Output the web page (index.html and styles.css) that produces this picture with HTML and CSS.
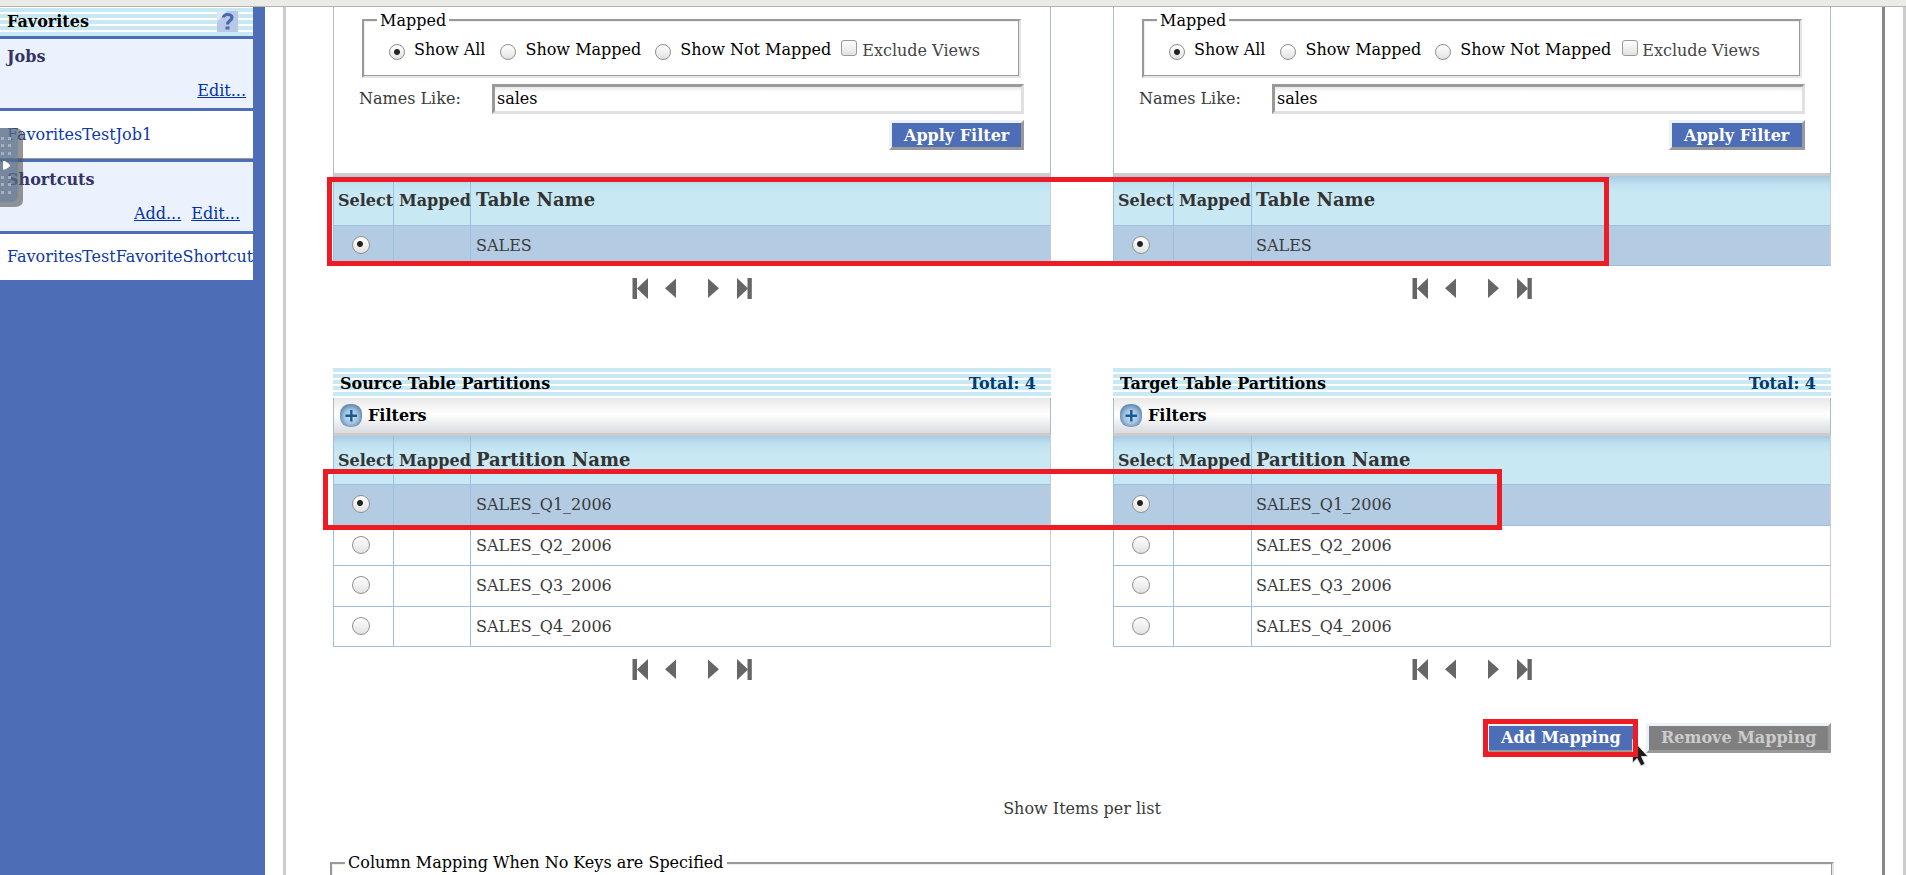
FILE: index.html
```html
<!DOCTYPE html>
<html lang="en">
<head>
<meta charset="utf-8">
<title>Table Mapping</title>
<link rel="stylesheet" href="styles.css">
</head>
<body>
<svg class="defs" width="0" height="0">
  <defs>
    <radialGradient id="ball" cx=".5" cy=".55" r=".6"><stop offset="0" stop-color="#cfe4f4"/><stop offset=".5" stop-color="#a4c4df"/><stop offset=".85" stop-color="#6a90b6"/></radialGradient>
    <symbol id="first" viewBox="0 0 16 21"><path d="M.5 0H5V21H.5ZM16 0V21L5 10.500Z"/></symbol>
    <symbol id="prev" viewBox="0 0 11 21"><path d="M11 .5V20L0 10.300Z"/></symbol>
    <symbol id="next" viewBox="0 0 11 21"><path d="M0 .5V20L11 10.300Z"/></symbol>
    <symbol id="last" viewBox="0 0 16 21"><path d="M10.500 0H14.800V21H10.500ZM0 0V21L11 10.500Z"/></symbol>
    <symbol id="plus" viewBox="0 0 22 23"><rect x="0" y="0" width="22" height="23" rx="9.500" fill="url(#ball)"/><path d="M11.300 6V17.500M5.500 11.800H17" stroke="#155a94" stroke-width="2.400" fill="none"/></symbol>
  </defs>
</svg>
<div class="top"></div>
<div class="app">
  <aside class="side">
    <div class="fav"><b>Favorites</b>
      <svg class="help" viewBox="0 0 21 21"><rect width="21" height="21" fill="#b9c8e6"/><path d="M0 0H10L0 11Z" fill="#dfe6f5"/><path d="M6.500 6.500C6.500 2.500 15 2.500 15 6.500C15 9.500 10.500 9.500 10.500 13.500" fill="none" stroke="#4a68b0" stroke-width="3.200"/><rect x="8.500" y="15.500" width="4" height="3" fill="#4a68b0"/></svg>
    </div>
    <div class="group"><b>Jobs</b><div class="links jobs"><a>Edit...</a></div></div>
    <div class="item underline">FavoritesTestJob1</div>
    <div class="group"><b>Shortcuts</b><div class="links"><a>Add...</a><a>Edit...</a></div></div>
    <div class="item last">FavoritesTestFavoriteShortcut</div>
    <svg class="handle" viewBox="0 0 23 80"><path d="M0 0H15Q23 0 23 8V72Q23 79 15 79H0Z" fill="#505050" fill-opacity=".6"/><path d="M0 0H12Q18 1 18 8V66Q18 74 11 74H0Z" fill="#5c7ba6" fill-opacity=".5"/><path d="M3 33H5Q10 36 10 37.500Q10 39 5 41.500H3Z" fill="#fff"/><g fill="#a5b1c1"><path d="M1 9h3v3h-3zM8 9h3v3h-3zM1 16h3v3h-3zM8 16h3v3h-3zM1 24h3v3h-3zM8 24h3v3h-3zM1 48h3v3h-3zM8 48h3v3h-3zM1 55h3v3h-3zM8 55h3v3h-3zM1 63h3v3h-3zM8 63h3v3h-3z"/></g></svg>
  </aside>
  <main class="main">
    <div class="pair">
      <section class="panel">
        <div class="filter">
          <fieldset class="mapped"><legend>Mapped</legend><div class="opts">
            <i class="radio on"></i><span>Show All</span><i class="radio r2"></i><span>Show Mapped</span><i class="radio r3"></i><span>Show Not Mapped</span><i class="check"></i><span class="ex">Exclude Views</span></div></fieldset>
          <div class="like"><label>Names Like:</label><div class="input">sales</div></div>
          <div class="act"><div class="btn">Apply Filter</div></div>
        </div>
        <div class="grid">
          <div class="row head"><b>Select</b><b>Mapped</b><b class="big">Table Name</b></div>
          <div class="row sel"><span><i class="radio on"></i></span><span></span><span>SALES</span></div>
        </div>
        <div class="pager"><svg><use href="#first"/></svg><svg class="s"><use href="#prev"/></svg><svg class="s n"><use href="#next"/></svg><svg><use href="#last"/></svg></div>
      </section>
      <section class="panel target">
        <div class="filter">
          <fieldset class="mapped"><legend>Mapped</legend><div class="opts">
            <i class="radio on"></i><span>Show All</span><i class="radio r2"></i><span>Show Mapped</span><i class="radio r3"></i><span>Show Not Mapped</span><i class="check"></i><span class="ex">Exclude Views</span></div></fieldset>
          <div class="like"><label>Names Like:</label><div class="input">sales</div></div>
          <div class="act"><div class="btn">Apply Filter</div></div>
        </div>
        <div class="grid">
          <div class="row head"><b>Select</b><b>Mapped</b><b class="big">Table Name</b></div>
          <div class="row sel"><span><i class="radio on"></i></span><span></span><span>SALES</span></div>
        </div>
        <div class="pager"><svg><use href="#first"/></svg><svg class="s"><use href="#prev"/></svg><svg class="s n"><use href="#next"/></svg><svg><use href="#last"/></svg></div>
      </section>
    </div>
    <div class="pair parts">
      <section class="panel">
        <div class="title"><b>Source Table Partitions</b><b class="total">Total: 4</b></div>
        <div class="bar"><svg><use href="#plus"/></svg><b>Filters</b></div>
        <div class="grid">
          <div class="row head"><b>Select</b><b>Mapped</b><b class="big">Partition Name</b></div>
          <div class="row sel tall"><span><i class="radio on"></i></span><span></span><span>SALES_Q1_2006</span></div>
          <div class="row"><span><i class="radio"></i></span><span></span><span>SALES_Q2_2006</span></div>
          <div class="row tall"><span><i class="radio"></i></span><span></span><span>SALES_Q3_2006</span></div>
          <div class="row"><span><i class="radio"></i></span><span></span><span>SALES_Q4_2006</span></div>
        </div>
        <div class="pager"><svg><use href="#first"/></svg><svg class="s"><use href="#prev"/></svg><svg class="s n"><use href="#next"/></svg><svg><use href="#last"/></svg></div>
      </section>
      <section class="panel target">
        <div class="title"><b>Target Table Partitions</b><b class="total">Total: 4</b></div>
        <div class="bar"><svg><use href="#plus"/></svg><b>Filters</b></div>
        <div class="grid">
          <div class="row head"><b>Select</b><b>Mapped</b><b class="big">Partition Name</b></div>
          <div class="row sel tall"><span><i class="radio on"></i></span><span></span><span>SALES_Q1_2006</span></div>
          <div class="row"><span><i class="radio"></i></span><span></span><span>SALES_Q2_2006</span></div>
          <div class="row tall"><span><i class="radio"></i></span><span></span><span>SALES_Q3_2006</span></div>
          <div class="row"><span><i class="radio"></i></span><span></span><span>SALES_Q4_2006</span></div>
        </div>
        <div class="pager"><svg><use href="#first"/></svg><svg class="s"><use href="#prev"/></svg><svg class="s n"><use href="#next"/></svg><svg><use href="#last"/></svg></div>
      </section>
    </div>
    <div class="buttons"><div class="btn add">Add Mapping</div><div class="btn off">Remove Mapping</div></div>
    <div class="show">Show Items per list</div>
    <fieldset class="keys"><legend>Column Mapping When No Keys are Specified</legend></fieldset>
  </main>
  <div class="edge"></div>
</div>
<svg class="cursor" viewBox="0 0 18 28"><path d="M.5 .5V24L5 19.500L9 27L13 25L9.500 17.500H16Z" fill="#1c1c1c" stroke="#ddd"/></svg>
<div class="mark m1"></div>
<div class="mark m2"></div>
<div class="mark m3"></div>
</body>
</html>
```
FILE: styles.css
```css
* { box-sizing: border-box; }
body { margin: 0; height: 875px; overflow: hidden; background: #fff; color: #3a3a3a; font: 16px/20px "DejaVu Serif", serif; white-space: nowrap; }
.defs { position: absolute; }
.top { height: 7px; background: #ebebe8; border-bottom: 1px solid #b5b5a8; }
.app { display: flex; height: 868px; }
.side { position: relative; width: 265px; flex: none; background: #4d6db6; padding-right: 12px; }
.fav { height: 29px; display: flex; justify-content: space-between; padding: 4px 15px 0 7px; color: #000; background: repeating-linear-gradient(#fff 0 1px, #c8e9f4 1px 5px, #fff 5px 6px); }
.fav b { padding-top: 1px; }
.help { width: 21px; height: 21px; }
.group { margin-top: 3px; height: 69px; background: #ecf2fd; padding: 8px 0 0 7px; color: #333366; }
.group b { display: block; }
.links { display: flex; justify-content: flex-end; gap: 10px; padding: 14px 13px 0 0; }
.links.jobs { padding-right: 7px; }
.links a { color: #0033aa; text-decoration: underline; }
.item { margin-top: 3px; height: 47px; padding: 13px 0 0 7px; background: #fff; color: #0c38a8; overflow: hidden; }
.item.underline { height: 48px; border-bottom: 1px solid #999; padding-top: 14px; }
.item.last { height: 46px; }
.handle { position: absolute; left: 0; top: 121px; width: 23px; height: 80px; }
.main { width: 1602px; flex: none; margin-left: 18px; border-left: 3px solid #ccc; border-right: 3px solid #888; padding-left: 47px; }
.edge { margin-left: auto; width: 3px; background: #ccc; }
.pair { display: flex; gap: 62px; }
.panel { width: 718px; }
.filter { height: 169px; border: solid #a8c0c0; border-width: 0 1px; border-bottom: 3px solid #ccc; padding: 1px 0 0 28px; }
.mapped, .keys { border: 2px solid; border-color: #999 #e6e6e6 #e6e6e6 #999; box-shadow: inset -1px -1px #999, inset 1px 1px #eee; }
.mapped { width: 659px; height: 70px; margin: 0; padding: 0 0 0 25px; }
.target .mapped { width: 660px; }
legend { color: #000; padding: 0 3px; margin-left: 13px; background: #fff; }
.mapped legend { margin-left: -12px; height: 24px; padding-top: 3px; }
.opts { display: flex; color: #000; padding-top: 8px; }
.opts span { margin-left: 9px; }
.opts .radio { margin-top: 4px; }
.radio { display: block; width: 16px; height: 16px; flex: none; border-radius: 50%; border: 1px solid #909090; background: linear-gradient(#fff, #e2e2e0); }
.radio.on { background: radial-gradient(circle, #222 0 2.5px, transparent 3.5px), linear-gradient(#fff, #e2e2e0); }
.row .radio.on { background: radial-gradient(circle at 7px 7px, #222 0 2.5px, transparent 3.5px), linear-gradient(#fff, #e2e2e0); }
.opts .r2 { margin-left: 15px; }
.opts .r3 { margin-left: 14px; }
.check { width: 16px; height: 16px; border: 1px solid #999; border-radius: 3px; background: linear-gradient(#fff, #e2e2e0); margin-left: 10px; }
.target .check { margin-left: 11px; }
.opts .ex { color: #444; margin: 1px 0 0 5px; }
.target .ex { margin-left: 4px; }
.like { display: flex; justify-content: space-between; width: 665px; margin-left: -3px; margin-top: 6px; height: 31px; }
.target .like, .target .act { width: 666px; }
.like label { padding-top: 5px; }
.input { width: 532px; height: 30px; border: 3px solid; border-color: #999 #e0e0e0 #e0e0e0 #999; padding: 2px 1px 2px 2px; color: #000; background: linear-gradient(#e8e8e8, #fff 5px); }
.target .input { width: 533px; }
.act { margin: 5px 0 0 -3px; width: 665px; display: flex; justify-content: flex-end; }
.btn { height: 30px; border: 3px solid; border-color: #ebf2fc #999 #999 #ebf2fc; background: #4d6db6; color: #fff; font-weight: bold; padding: 2px 0 0 12px; }
.act .btn { width: 135px; padding-top: 3px; }
.target .act .btn { width: 136px; }
.grid { border: 1px solid #9fbfdf; border-top: 0; border-right-color: #ccc; }
.row { display: grid; grid-template-columns: 60px 77px 1fr; height: 40px; background: #fff; }
.target .row { grid-template-columns: 60px 78px 1fr; }
.row > * { border-right: 1px solid #9fbfdf; padding: 10px 0 0 5px; }
.row > *:last-child { border-right: 0; }
.target .row > *:last-child { padding-left: 4px; }
.row + .row { border-top: 1px solid #9fbfdf; }
.row.tall { height: 41px; }
.row.sel { background: #b4cce3; }
.row .radio { width: 18px; height: 18px; margin-left: 13px; }
.row.head { height: 49px; background: linear-gradient(#a9c9e0, #bfe0f0 8px, #c8e9f4 18px); color: #333; }
.parts .row.head { height: 48px; }
.row.head > * { padding-top: 15px; }
.row.head > *:first-child { padding-left: 4px; }
.row.head .big { font-size: 18px; padding-top: 14px; }
.pager { display: flex; padding: 12px 0 0 299px; fill: #666; }
.pager svg { width: 16px; height: 21px; margin-right: 17px; }
.pager .s { width: 11px; margin-right: 18px; }
.pager .s:nth-child(2) { margin-right: 32px; }
.parts { margin-top: 69px; }
.title { height: 30px; display: flex; justify-content: space-between; padding: 6px 15px 0 7px; color: #000; background: repeating-linear-gradient(#c8e9f4 0 4px, #fff 4px 6px); }
.total { color: #003a70; }
.bar { height: 38px; display: flex; color: #000; border: 1px solid #a8c0c0; border-top: 0; border-bottom: 3px solid #ccc; background: linear-gradient(#e8e8e8, #fff 16px, #d9dbdf); padding: 6px 0 0 6px; }
.bar svg { width: 22px; height: 23px; margin-right: 6px; }
.bar b { padding-top: 2px; }
.buttons { display: flex; justify-content: flex-end; gap: 10px; margin-top: 43px; width: 1498px; }
.add { width: 150px; }
.off { width: 185px; background: #808080; color: #ccc; }
.show { width: 1498px; text-align: center; margin-top: 46px; }
.keys { margin: 34px 0 0 -3px; width: 1504px; height: 60px; padding: 0; }
.mark { position: absolute; border: 5px solid #ed1c24; }
.m1 { left: 327px; top: 177px; width: 1282px; height: 89px; }
.m2 { left: 323px; top: 469px; width: 1179px; height: 61px; }
.m3 { left: 1483px; top: 719px; width: 155px; height: 38px; }
.cursor { position: absolute; left: 1632px; top: 739px; width: 18px; height: 28px; }
```
